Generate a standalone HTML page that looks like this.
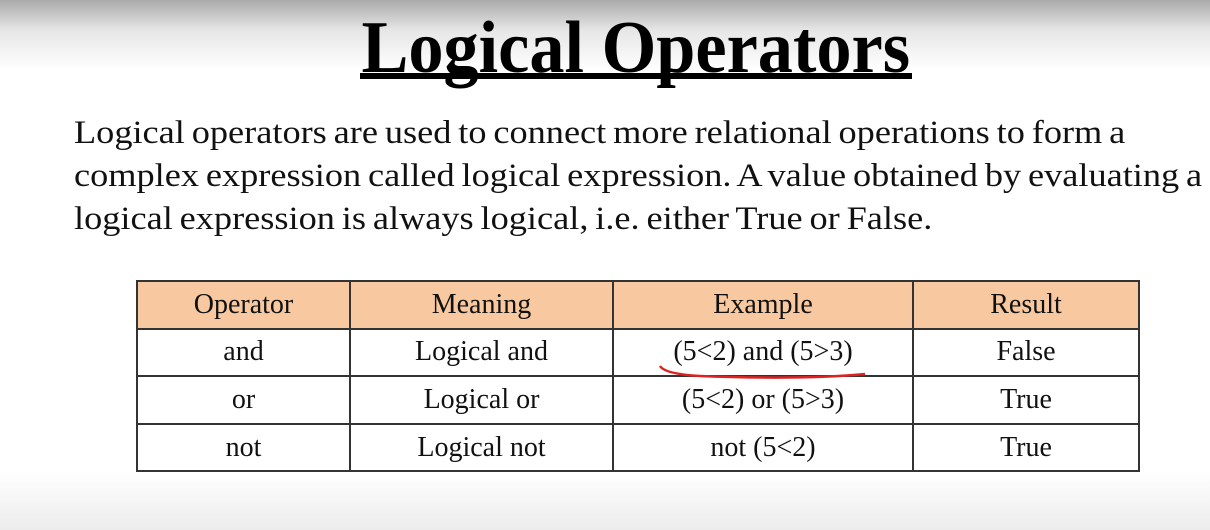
<!DOCTYPE html>
<html><head><style>
body{margin:0;width:1210px;height:530px;overflow:hidden;background:linear-gradient(#aaa 0px,#e6e6e6 30px,#fff 70px,#fff 470px,#ececec 530px);font-family:"Liberation Serif",serif;position:relative}
.t{position:absolute;left:300px;top:8px;width:672px;text-align:center;font-weight:bold;font-size:74px;line-height:80px;white-space:nowrap}
.t span{display:inline-block;transform:scaleX(0.95);transform-origin:center}
.ul{position:absolute;left:360px;top:73px;width:552px;height:6px;background:#000}
.p{position:absolute;left:74px;top:112px;font-size:33px;word-spacing:-2px;line-height:43px;color:#111;white-space:nowrap;transform:scaleX(1.1);transform-origin:left top}
table{position:absolute;left:136px;top:280px;border-collapse:collapse;font-size:28px;color:#111}
td{border:2px solid #333;text-align:center;height:45.6px;padding:0}
tr.h td{background:#f8c9a0}
</style></head><body>
<div class="t"><span>Logical Operators</span></div>
<div class="ul"></div>
<div class="p">Logical operators are used to connect more relational operations to form a<br>complex expression called logical expression. A value obtained by evaluating a<br>logical expression is always logical, i.e. either True or False.</div>
<table>
<tr class="h"><td style="width:211px">Operator</td><td style="width:261px">Meaning</td><td style="width:298px">Example</td><td style="width:224px">Result</td></tr>
<tr><td>and</td><td>Logical and</td><td>(5&lt;2) and (5&gt;3)</td><td>False</td></tr>
<tr><td>or</td><td>Logical or</td><td>(5&lt;2) or (5&gt;3)</td><td>True</td></tr>
<tr><td>not</td><td>Logical not</td><td>not (5&lt;2)</td><td>True</td></tr>
</table>
<svg style="position:absolute;left:0;top:0" width="1210" height="530"><path d="M660 366 Q665 374 700 376 Q800 380 865 374" stroke="#d22" stroke-width="2.5" fill="none"/></svg>
</body></html>
